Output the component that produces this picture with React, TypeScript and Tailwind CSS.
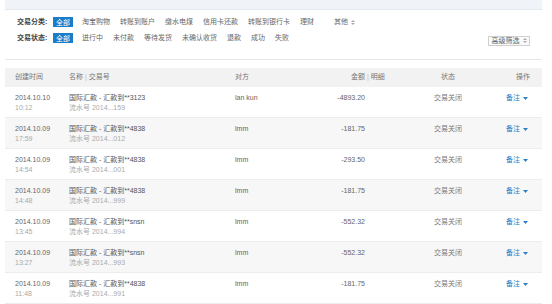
import React from "react";

const rows = [
  { d: "2014.10.10", t: "10:12", to: "**3123", sn: "2014...159", who: "lan kun", amt: "-4893.20" },
  { d: "2014.10.09", t: "17:59", to: "**4838", sn: "2014...012", who: "lmm", amt: "-181.75" },
  { d: "2014.10.09", t: "14:54", to: "**4838", sn: "2014...001", who: "lmm", amt: "-293.50" },
  { d: "2014.10.09", t: "14:48", to: "**4838", sn: "2014...999", who: "lmm", amt: "-181.75" },
  { d: "2014.10.09", t: "13:45", to: "**snsn", sn: "2014...994", who: "lmm", amt: "-552.32" },
  { d: "2014.10.09", t: "13:27", to: "**snsn", sn: "2014...993", who: "lmm", amt: "-552.32" },
  { d: "2014.10.09", t: "11:48", to: "**4838", sn: "2014...991", who: "lmm", amt: "-181.75" },
];

const Caret = ({ color = "#2a7fc8" }: { color?: string }) => (
  <svg width="5" height="3" viewBox="0 0 5 3" className="inline-block">
    <path d="M0 0 L5 0 L2.5 3 Z" fill={color} />
  </svg>
);

const UpDown = () => (
  <svg width="4" height="5" viewBox="0 0 4 5" className="inline-block">
    <path d="M0 2 L2 0 L4 2 Z M0 3 L4 3 L2 5 Z" fill="#aaa" />
  </svg>
);

const Badge = () => (
  <span className="flex h-[10px] w-[20px] items-center justify-center bg-[#1b7cc8] text-white leading-none">
    全部
  </span>
);

export default function App() {
  const cats = ["淘宝购物", "转账到账户", "缴水电煤", "信用卡还款", "转账到银行卡", "理财"];
  const states = ["进行中", "未付款", "等待发货", "未确认收货", "退款", "成功", "失败"];
  return (
    <div
      className="h-[304px] w-[552px] overflow-hidden bg-white text-[7px]"
      style={{ fontFamily: '"Liberation Sans", "Noto Sans CJK SC", sans-serif' }}
    >
      <div className="ml-[5px] w-[537px]">
        <div className="h-[10px] border-b border-[#e4e9ee] bg-[#f0f4f8]" />
        <div className="border-b border-[#e6e6e6] pt-[4px] pb-[13px] pl-[12px] pr-[12px]">
          <div className="flex h-[16px] items-center text-[#666]">
            <span className="w-[36px] font-bold text-[#444]">交易分类:</span>
            <Badge />
            <div className="ml-[9px] flex items-center gap-[10px]">
              {cats.map((c) => (
                <span key={c}>{c}</span>
              ))}
              <span className="ml-[10px] flex items-center gap-[3px]">
                其他 <UpDown />
              </span>
            </div>
          </div>
          <div className="flex h-[16px] items-center text-[#666]">
            <span className="w-[36px] font-bold text-[#444]">交易状态:</span>
            <Badge />
            <div className="ml-[9px] flex items-center gap-[10px]">
              {states.map((c) => (
                <span key={c}>{c}</span>
              ))}
            </div>
            <button className="ml-auto mt-[5px] flex h-[10px] w-[42px] items-center justify-center gap-[3px] border border-[#d0d0d0] bg-[#fafafa] leading-none text-[#666]">
              高级筛选 <UpDown />
            </button>
          </div>
        </div>

        <div className="mt-[8px] flex h-[19px] items-center bg-[#f2f2f2] pl-[10px] text-[#777]">
          <div className="w-[54px]">创建时间</div>
          <div className="w-[166px]">
            名称 <span className="text-[#bbb]">|</span> 交易号
          </div>
          <div className="w-[70px]">对方</div>
          <div className="w-[60px] text-right">金额</div>
          <div className="w-[55px] pl-[2px]">
            <span className="text-[#bbb]">|</span> 明细
          </div>
          <div className="w-[56px] text-center">状态</div>
          <div className="ml-[40px]">操作</div>
        </div>

        {rows.map((r, i) => (
          <div
            key={i}
            className={`flex h-[31px] border-b border-[#ececec] pl-[10px] pt-[6px] leading-[10px] ${
              i % 2 === 1 ? "bg-[#f7f7f7]" : "bg-white"
            }`}
          >
            <div className="w-[54px]">
              <div className="text-[#666]">{r.d}</div>
              <div className="text-[#aaa]">{r.t}</div>
            </div>
            <div className="w-[166px]">
              <div className="text-[#555]">国际汇款 - 汇款到{r.to}</div>
              <div className="text-[#aaa]">流水号 {r.sn}</div>
            </div>
            <div className="w-[70px] text-[#666]">{r.who}</div>
            <div className="w-[60px] text-right text-[#666]">{r.amt}</div>
            <div className="w-[55px]" />
            <div className="w-[56px] text-center text-[#777]">交易关闭</div>
            <div className="ml-[30px] flex h-[10px] items-center gap-[3px] text-[#2a7fc8]">
              备注 <Caret />
            </div>
          </div>
        ))}
      </div>
    </div>
  );
}
